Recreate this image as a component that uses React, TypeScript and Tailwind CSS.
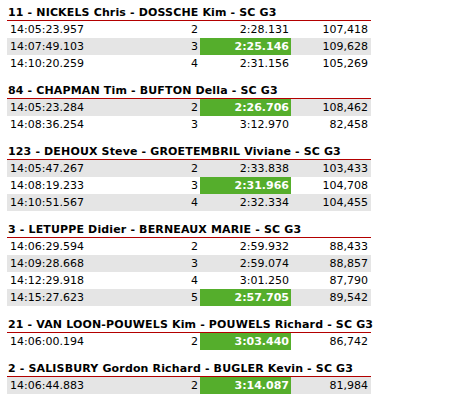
import React from "react";

type Lap = { t: string; n: string; lap: string; pts: string; best?: boolean };
type Group = { title: string; laps: Lap[] };

const groups: Group[] = [
  {
    title: "11 - NICKELS Chris - DOSSCHE Kim - SC G3",
    laps: [
      { t: "14:05:23.957", n: "2", lap: "2:28.131", pts: "107,418" },
      { t: "14:07:49.103", n: "3", lap: "2:25.146", pts: "109,628", best: true },
      { t: "14:10:20.259", n: "4", lap: "2:31.156", pts: "105,269" },
    ],
  },
  {
    title: "84 - CHAPMAN Tim - BUFTON Della - SC G3",
    laps: [
      { t: "14:05:23.284", n: "2", lap: "2:26.706", pts: "108,462", best: true },
      { t: "14:08:36.254", n: "3", lap: "3:12.970", pts: "82,458" },
    ],
  },
  {
    title: "123 - DEHOUX Steve - GROETEMBRIL Viviane - SC G3",
    laps: [
      { t: "14:05:47.267", n: "2", lap: "2:33.838", pts: "103,433" },
      { t: "14:08:19.233", n: "3", lap: "2:31.966", pts: "104,708", best: true },
      { t: "14:10:51.567", n: "4", lap: "2:32.334", pts: "104,455" },
    ],
  },
  {
    title: "3 - LETUPPE Didier - BERNEAUX MARIE - SC G3",
    laps: [
      { t: "14:06:29.594", n: "2", lap: "2:59.932", pts: "88,433" },
      { t: "14:09:28.668", n: "3", lap: "2:59.074", pts: "88,857" },
      { t: "14:12:29.918", n: "4", lap: "3:01.250", pts: "87,790" },
      { t: "14:15:27.623", n: "5", lap: "2:57.705", pts: "89,542", best: true },
    ],
  },
  {
    title: "21 - VAN LOON-POUWELS Kim - POUWELS Richard - SC G3",
    laps: [{ t: "14:06:00.194", n: "2", lap: "3:03.440", pts: "86,742", best: true }],
  },
  {
    title: "2 - SALISBURY Gordon Richard - BUGLER Kevin - SC G3",
    laps: [{ t: "14:06:44.883", n: "2", lap: "3:14.087", pts: "81,984", best: true }],
  },
];

export default function App() {
  let idx = 0;
  return (
    <div
      className="w-[460px] h-[406px] bg-white text-black pt-[6px] pl-[7px]"
      style={{ fontFamily: '"DejaVu Sans", Verdana, sans-serif' }}
    >
      <div className="w-[364px] flex flex-col">
        {groups.map((g) => (
          <div key={g.title} className="mb-[12px] flex flex-col">
            <div className="h-[15px] border-b border-[#b30000] pl-[1px] text-[11px] font-bold leading-[14px] tracking-[0.15px] whitespace-nowrap">
              {g.title}
            </div>
            {g.laps.map((l) => {
              const gray = idx % 2 === 1;
              idx++;
              return (
                <div
                  key={l.t}
                  className={
                    "grid grid-cols-[150px_43px_91px_80px] h-[17px] text-[11px] leading-[17px] " +
                    (gray ? "bg-[#e5e5e5]" : "")
                  }
                >
                  <div className="pl-[3px]">{l.t}</div>
                  <div className="text-right pr-[2px]">{l.n}</div>
                  <div
                    className={
                      "text-right pr-[2px] " +
                      (l.best ? "bg-[#55ae2c] text-white font-bold" : "")
                    }
                  >
                    {l.lap}
                  </div>
                  <div className="text-right pr-[3px]">{l.pts}</div>
                </div>
              );
            })}
          </div>
        ))}
      </div>
    </div>
  );
}
